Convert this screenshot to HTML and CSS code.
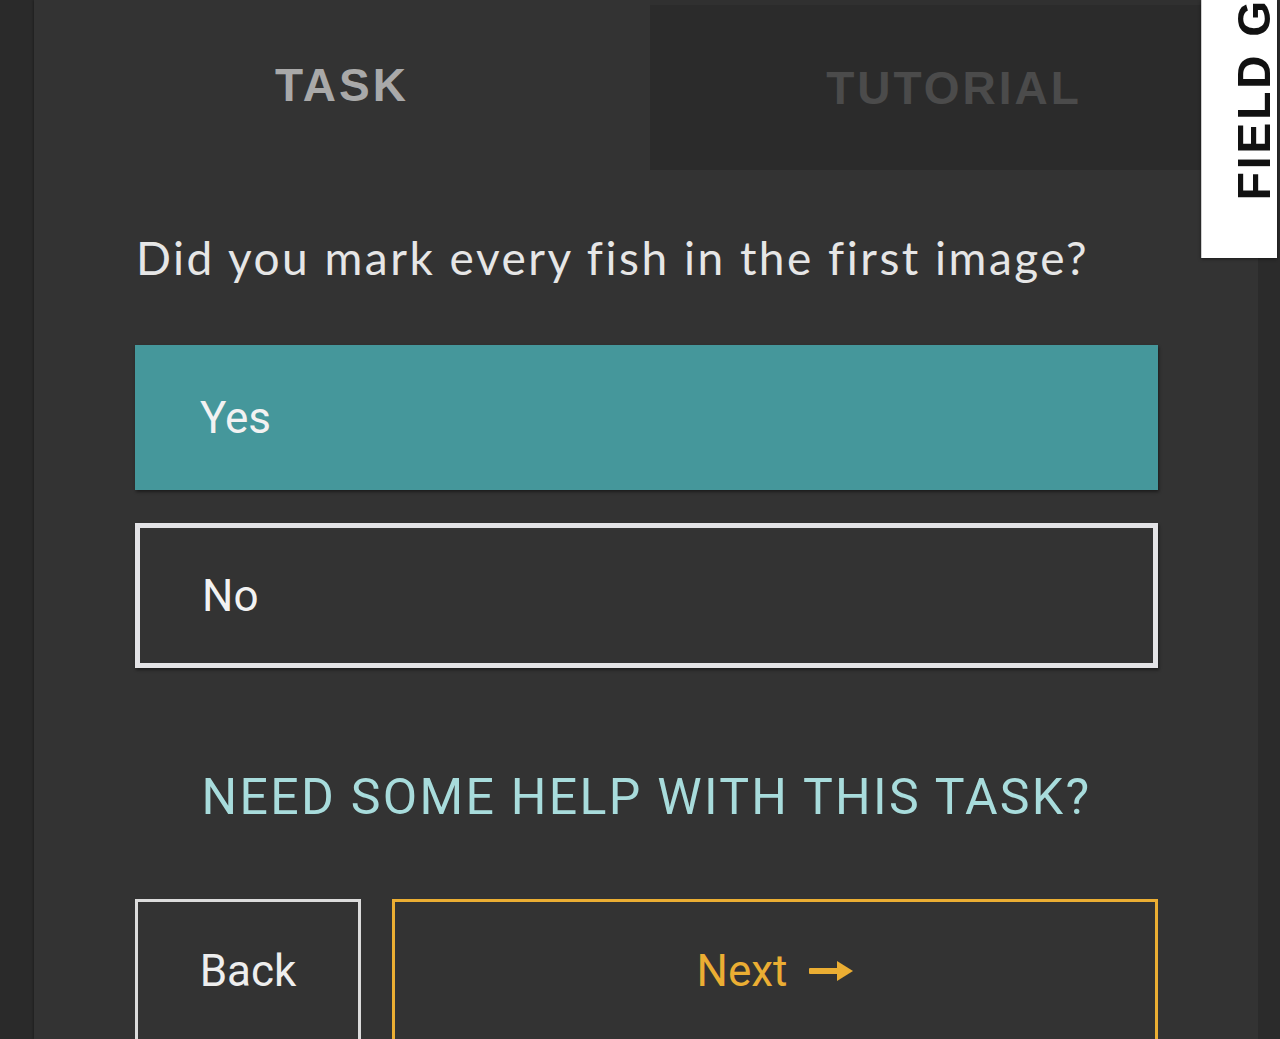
FILE: index.html
```html
<!DOCTYPE html>
<html lang="en">

<head>
    <meta charset="UTF-8">
    <meta name="viewport" content="width=device-width, initial-scale=1.0">
    <title>Task</title>
    <link rel="stylesheet" href="styles.css">
</head>

<body>
    <div class="page">
        <div class="gutter"></div>

        <main class="panel">
            <!-- task / tutorial tabs -->
            <nav class="tabs">
                <button class="tab active">TASK</button>
                <button class="tab">TUTORIAL</button>
            </nav>

            <section class="task">
                <p class="question">Did you mark every fish in the first image?</p>

                <div class="answers">
                    <button class="answer selected">Yes</button>
                    <button class="answer">No</button>
                </div>

                <a class="help" href="#">NEED SOME HELP WITH THIS TASK?</a>

                <div class="controls">
                    <button class="back">Back</button>
                    <button class="next">
                        Next
                        <svg class="arrow" width="44" height="22" viewBox="0 0 44 22">
                            <rect x="0" y="8" width="30" height="6" rx="1" fill="#ebae33"/>
                            <path d="M28 1 L44 11 L28 21 Z" fill="#ebae33"/>
                        </svg>
                    </button>
                </div>
            </section>
        </main>

        <div class="edge"></div>
    </div>

    <!-- field guide pull tab -->
    <div class="field-guide">
        <span class="field-guide-label">FIELD GUIDE</span>
    </div>
</body>

</html>
```

FILE: styles.css
```css
body {
    margin: 0;
    overflow: hidden;
    background-color: #2a2a2a;
    font-family: Roboto, "Liberation Sans", sans-serif;
}

button {
    font-family: inherit;
    cursor: pointer;
}

.page {
    display: flex;
    height: 1039px;
}

.gutter {
    width: 34px;
    flex-shrink: 0;
    background-color: #2a2a2a;
}

.panel {
    width: 1224px;
    flex-shrink: 0;
    background-color: #333333;
    box-shadow: -1px 0 2px rgba(0, 0, 0, 0.25);
}

.edge {
    flex: 1;
    background-color: #2b2b2b;
}

/* tabs */
.tabs {
    display: flex;
    height: 170px;
    background-color: #303030;
}

.tab {
    border: none;
    padding: 0;
    font-family: "Liberation Sans", Arial, sans-serif;
    font-weight: bold;
    font-size: 46px;
    letter-spacing: 3px;
    color: #4b4b4b;
    background-color: #2b2b2b;
    margin-top: 5px;
    width: 608px;
}

.tab.active {
    width: 616px;
    margin-top: 0;
    color: #a9a9a9;
    background-color: #333333;
}

/* task body */
.task {
    padding: 60px 100px 0 101px;
}

.question {
    margin: 0 0 59px 1px;
    font-family: Lato, sans-serif;
    font-size: 46px;
    line-height: 56px;
    letter-spacing: 2.5px;
    color: #e6e6e6;
}

.answers {
    display: flex;
    flex-direction: column;
    gap: 33px;
}

.answer {
    height: 145px;
    padding: 0 0 0 62px;
    text-align: left;
    font-size: 44px;
    color: #f2f2f2;
    background-color: #333333;
    border: 5px solid #e3e3e6;
    box-shadow: 1px 2px 3px rgba(0, 0, 0, 0.45);
}

.answer.selected {
    padding-left: 65px;
    border: none;
    background-color: #45979b;
}

.help {
    display: block;
    margin: 99px 0 72px;
    text-align: center;
    font-size: 50px;
    line-height: 60px;
    letter-spacing: 2.3px;
    color: #a8dcdc;
    text-decoration: none;
}

.controls {
    display: flex;
    gap: 31px;
}

.back,
.next {
    height: 144px;
    font-size: 44px;
    background-color: #333333;
}

.back {
    width: 226px;
    color: #eeeeee;
    border: 3px solid #dcdcdc;
}

.next {
    flex: 1;
    display: flex;
    align-items: center;
    justify-content: center;
    gap: 22px;
    color: #ebae33;
    border: 3px solid #ebae33;
}

.arrow {
    display: block;
}

/* field guide tab */
.field-guide {
    position: fixed;
    top: 0;
    left: 1201px;
    width: 75px;
    height: 258px;
    overflow: hidden;
    background-color: #ffffff;
    border-left: 1px solid #cfcfcf;
    box-shadow: 0 1px 3px rgba(0, 0, 0, 0.5);
}

.field-guide-label {
    position: absolute;
    left: 24px;
    bottom: 58px;
    writing-mode: vertical-rl;
    transform: rotate(180deg);
    white-space: nowrap;
    font-family: "Liberation Sans", Arial, sans-serif;
    font-weight: bold;
    font-size: 46px;
    line-height: 56px;
    letter-spacing: 3px;
    color: #111111;
}
```
